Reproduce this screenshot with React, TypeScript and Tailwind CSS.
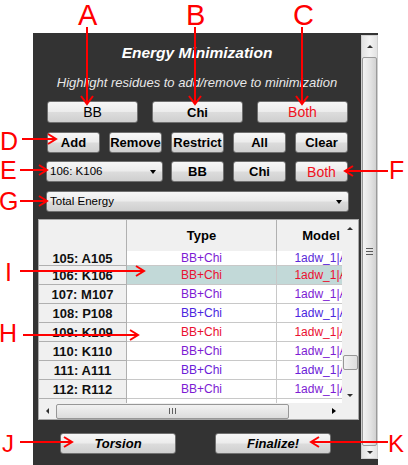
import React from "react";

const face =
  "flex items-center rounded-[3px] border border-[#707070] bg-[linear-gradient(#f7f7f7_0%,#ececec_48%,#dcdcdc_52%,#cfcfcf_100%)] leading-none";
const btn = `${face} justify-center`;

const rows = [
  { id: "105: A105", h: "h-[15px]", type: "text-[#7d1bd3]", model: "text-[#5a2ad8]", sel: false },
  { id: "106: K106", h: "h-[19px]", type: "text-[#ea1030]", model: "text-[#ea1030]", sel: true },
  { id: "107: M107", h: "h-[19px]", type: "text-[#7d1bd3]", model: "text-[#7d1bd3]", sel: false },
  { id: "108: P108", h: "h-[19px]", type: "text-[#4b26e0]", model: "text-[#4b26e0]", sel: false },
  { id: "109: K109", h: "h-[19px]", type: "text-[#ea1030]", model: "text-[#ea1030]", sel: false },
  { id: "110: K110", h: "h-[19px]", type: "text-[#7d1bd3]", model: "text-[#7d1bd3]", sel: false },
  { id: "111: A111", h: "h-[19px]", type: "text-[#6a20d8]", model: "text-[#6a20d8]", sel: false },
  { id: "112: R112", h: "h-[19px]", type: "text-[#7d1bd3]", model: "text-[#7d1bd3]", sel: false },
  { id: "113: L113", h: "h-[19px]", type: "text-[#7d1bd3]", model: "text-[#7d1bd3]", sel: false },
];

const Down = () => (
  <div className="h-0 w-0 border-x-[3.5px] border-t-[4px] border-x-transparent border-t-black" />
);
const Up = () => (
  <div className="h-0 w-0 border-x-[3px] border-b-[3px] border-x-transparent border-b-[#303030]" />
);
const SmallDown = () => (
  <div className="h-0 w-0 border-x-[3px] border-t-[3px] border-x-transparent border-t-[#303030]" />
);
const Left = () => (
  <div className="h-0 w-0 border-y-[3px] border-r-[3px] border-y-transparent border-r-[#303030]" />
);
const Right = () => (
  <div className="h-0 w-0 border-y-[3.5px] border-l-[4px] border-y-transparent border-l-black" />
);

const Combo = ({ label, w }: { label: string; w: string }) => (
  <div className={`${face} ${w} h-[21px] justify-between pl-[3px] pr-[6px] text-[11.5px] text-black`}>
    <span>{label}</span>
    <Down />
  </div>
);

const Arrow = ({ x1, x2, y }: { x1: number; x2: number; y: number }) => {
  const d = x2 > x1 ? -8 : 8;
  return (
    <g>
      <line x1={x1} y1={y} x2={x2} y2={y} />
      <polyline points={`${x2 + d},${y - 5} ${x2},${y} ${x2 + d},${y + 5}`} fill="none" />
    </g>
  );
};

const VArrow = ({ x }: { x: number }) => (
  <g>
    <line x1={x} y1={27} x2={x} y2={104} />
    <polyline points={`${x - 6},${96} ${x},${104} ${x + 6},${96}`} fill="none" />
  </g>
);

export default function App() {
  return (
    <div className="relative h-[465px] w-[408px] overflow-hidden bg-white font-['Liberation_Sans',Arial,sans-serif]">
      <div className="pl-[33px] pt-[33px]">
        <div className="flex h-[432px] w-[345px] bg-[#333333]">
          <div className="flex w-[328px] flex-col">
            <div className="mt-[10px] h-[20px] text-center text-[15.5px] font-bold italic leading-[20px] text-white">
              Energy Minimization
            </div>
            <div className="mt-[10px] h-[20px] text-center text-[13px] italic leading-[20px] text-[#e8e8e8]">
              Highlight residues to add/remove to minimization
            </div>

            <div className="ml-[14px] mt-[8px] grid w-[301px] grid-cols-3 gap-[14px]">
              <div className={`${btn} h-[22px] text-[14px] text-black`}>BB</div>
              <div className={`${btn} h-[22px] text-[13px] font-bold text-black`}>Chi</div>
              <div className={`${btn} h-[22px] text-[14px] text-[#f01020]`}>Both</div>
            </div>

            <div className="ml-[14px] mt-[9px] flex gap-[9px]">
              {["Add", "Remove", "Restrict", "All", "Clear"].map((t) => (
                <div key={t} className={`${btn} h-[21px] w-[53px] text-[13px] font-bold text-black`}>
                  {t}
                </div>
              ))}
            </div>

            <div className="ml-[13px] mt-[8px] flex h-[21px]">
              <Combo label="106: K106" w="w-[117px]" />
              <div className="ml-[8px] flex gap-[9px]">
                <div className={`${btn} h-[21px] w-[53px] text-[13px] font-bold text-black`}>BB</div>
                <div className={`${btn} h-[21px] w-[53px] text-[13px] font-bold text-black`}>Chi</div>
                <div className={`${btn} h-[21px] w-[53px] text-[14px] text-[#f01020]`}>Both</div>
              </div>
            </div>

            <div className="ml-[13px] mt-[9px]">
              <Combo label="Total Energy" w="w-[303px]" />
            </div>

            {/* residue table */}
            <div className="ml-[5px] mt-[7px] flex h-[201px] w-[321px] flex-col border border-[#a8a8a8] bg-white">
              <div className="flex h-[183px]">
                <div className="flex w-[303px] flex-col overflow-hidden">
                  <div className="flex h-[31px] shrink-0 bg-[#f0f0f0] text-[13px] font-bold text-black">
                    <div className="w-[88px] shrink-0 border-r border-[#b0b0b0]" />
                    <div className="flex w-[150px] shrink-0 items-center justify-center border-r border-[#b0b0b0]">
                      Type
                    </div>
                    <div className="flex w-[88px] shrink-0 items-center justify-center">Model</div>
                  </div>
                  {rows.map((r) => (
                    <div key={r.id} className={`flex ${r.h} shrink-0 text-[12px] leading-none`}>
                      <div className="flex w-[88px] shrink-0 items-center justify-center border-b border-r border-[#b0b0b0] bg-[#f0f0f0] text-[13px] font-bold text-[#111]">
                        {r.id}
                      </div>
                      <div
                        className={`flex w-[150px] shrink-0 items-center justify-center border-b border-r border-[#c8c8c8] ${r.type} ${r.sel ? "bg-[#c2d9d8]" : ""}`}
                      >
                        BB+Chi
                      </div>
                      <div
                        className={`flex w-[88px] shrink-0 items-center justify-center border-b border-[#c8c8c8] ${r.model} ${r.sel ? "bg-[#c2d9d8]" : ""}`}
                      >
                        1adw_1|A
                      </div>
                    </div>
                  ))}
                </div>
                <div className="flex w-[16px] flex-col items-center bg-[#f0f0f0]">
                  <div className="flex h-[17px] items-center justify-center">
                    <Up />
                  </div>
                  <div className="flex-1" />
                  <div className="mb-[1px] h-[15px] w-[15px] rounded-[2px] border border-[#979797] bg-[linear-gradient(90deg,#f2f2f2,#dedede)]" />
                  <div className="h-[17px]" />
                  <div className="flex h-[15px] items-center justify-center">
                    <SmallDown />
                  </div>
                </div>
              </div>
              <div className="flex h-[16px]">
                <div className="flex w-[303px] items-center bg-[#f0f0f0]">
                  <div className="flex w-[17px] justify-center">
                    <Left />
                  </div>
                  <div className="flex h-[15px] w-[233px] items-center justify-center rounded-[2px] border border-[#979797] bg-[linear-gradient(#f2f2f2,#dcdcdc)]">
                    <div className="flex gap-[2px]">
                      <div className="h-[6px] w-[1px] bg-[#606060]" />
                      <div className="h-[6px] w-[1px] bg-[#606060]" />
                      <div className="h-[6px] w-[1px] bg-[#606060]" />
                    </div>
                  </div>
                  <div className="flex-1" />
                  <div className="flex w-[17px] justify-center">
                    <Right />
                  </div>
                </div>
                <div className="w-[16px] bg-[#f0f0f0]" />
              </div>
            </div>

            <div className="ml-[27px] mt-[13px] flex gap-[39px]">
              <div className={`${btn} h-[21px] w-[116px] text-[13px] font-bold italic text-black`}>Torsion</div>
              <div className={`${btn} h-[21px] w-[116px] text-[13px] font-bold italic text-black`}>Finalize!</div>
            </div>
          </div>

          {/* panel scrollbar */}
          <div className="mt-[2px] flex h-[424px] w-[17px] flex-col items-center border border-[#cfcfcf] bg-[linear-gradient(90deg,#e2e2e2,#f3f3f3,#e2e2e2)]">
            <div className="flex h-[21px] items-center justify-center">
              <Up />
            </div>
            <div className="flex w-[15px] flex-1 items-center justify-center rounded-[2px] border border-[#9a9a9a] bg-[linear-gradient(90deg,#f4f4f4,#e6e6e6,#d2d2d2)]">
              <div className="flex flex-col gap-[2px]">
                <div className="h-[1px] w-[7px] bg-[#5a5a5a]" />
                <div className="h-[1px] w-[7px] bg-[#5a5a5a]" />
                <div className="h-[1px] w-[7px] bg-[#5a5a5a]" />
              </div>
            </div>
            <div className="flex h-[12px] items-center justify-center">
              <SmallDown />
            </div>
          </div>
        </div>
      </div>

      {/* annotation overlay */}
      <svg className="pointer-events-none absolute inset-0" width="408" height="465">
        <g stroke="#ff0000" strokeWidth="2">
          <VArrow x={87} />
          <VArrow x={195} />
          <VArrow x={302} />
          <Arrow x1={22} x2={56} y={139} />
          <Arrow x1={20} x2={47} y={170} />
          <Arrow x1={388} x2={345} y={171} />
          <Arrow x1={20} x2={47} y={201} />
          <Arrow x1={20} x2={144} y={271} />
          <Arrow x1={23} x2={138} y={335} />
          <Arrow x1={20} x2={72} y={442} />
          <Arrow x1={388} x2={311} y={442} />
        </g>
        <g fill="#ff0000" fontFamily="Liberation Sans, Arial, sans-serif">
          <text x="78" y="25" fontSize="29">A</text>
          <text x="186" y="25" fontSize="29">B</text>
          <text x="293" y="25" fontSize="29">C</text>
          <text x="0" y="150" fontSize="25">D</text>
          <text x="0" y="179" fontSize="25">E</text>
          <text x="389" y="179" fontSize="25">F</text>
          <text x="-1" y="210" fontSize="25">G</text>
          <text x="5" y="281" fontSize="25">I</text>
          <text x="-1" y="342" fontSize="25">H</text>
          <text x="2" y="452" fontSize="24">J</text>
          <text x="388" y="452" fontSize="24">K</text>
        </g>
      </svg>
    </div>
  );
}
